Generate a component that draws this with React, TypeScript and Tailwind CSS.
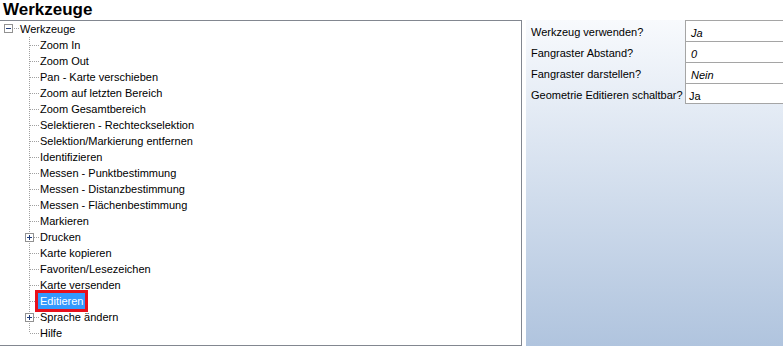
import React from 'react';

interface TreeItem {
  label: string;
  expandable?: boolean;
  selected?: boolean;
}

const items: TreeItem[] = [
  { label: 'Zoom In' },
  { label: 'Zoom Out' },
  { label: 'Pan - Karte verschieben' },
  { label: 'Zoom auf letzten Bereich' },
  { label: 'Zoom Gesamtbereich' },
  { label: 'Selektieren - Rechteckselektion' },
  { label: 'Selektion/Markierung entfernen' },
  { label: 'Identifizieren' },
  { label: 'Messen - Punktbestimmung' },
  { label: 'Messen - Distanzbestimmung' },
  { label: 'Messen - Flächenbestimmung' },
  { label: 'Markieren' },
  { label: 'Drucken', expandable: true },
  { label: 'Karte kopieren' },
  { label: 'Favoriten/Lesezeichen' },
  { label: 'Karte versenden' },
  { label: 'Editieren', selected: true },
  { label: 'Sprache ändern', expandable: true },
  { label: 'Hilfe' },
];

const props = [
  { label: 'Werkzeug verwenden?', value: 'Ja', italic: true },
  { label: 'Fangraster Abstand?', value: '0', italic: true },
  { label: 'Fangraster darstellen?', value: 'Nein', italic: true },
  { label: 'Geometrie Editieren schaltbar?', value: 'Ja', italic: false },
];

function ExpandBox({ x, y, open }: { x: number; y: number; open: boolean }) {
  return (
    <g>
      <rect x={x + 0.5} y={y + 0.5} width={8} height={8} fill="#fff" stroke="#919191" />
      <line x1={x + 2} y1={y + 4.5} x2={x + 7} y2={y + 4.5} stroke="#1f3c7a" />
      {!open && <line x1={x + 4.5} y1={y + 2} x2={x + 4.5} y2={y + 7} stroke="#1f3c7a" />}
    </g>
  );
}

function Connector({ last, expandable }: { last: boolean; expandable?: boolean }) {
  return (
    <svg width={40} height={16} className="shrink-0">
      <line x1={29.5} y1={0} x2={29.5} y2={last ? 8 : 16} stroke="#a0a0a0" strokeDasharray="1 1" />
      <line x1={30} y1={8.5} x2={39} y2={8.5} stroke="#a0a0a0" strokeDasharray="1 1" />
      {expandable && <ExpandBox x={25} y={4} open={false} />}
    </svg>
  );
}

export default function App() {
  return (
    <div className="w-[783px] h-[350px] bg-white overflow-hidden font-['Liberation_Sans',Arial,sans-serif] text-black">
      {/* Title */}
      <div className="h-[20px] pl-[3px] text-[17px] leading-[20px] font-bold">Werkzeuge</div>

      <div className="flex">
        {/* Tree */}
        <div className="ml-[-1px] w-[523px] h-[326px] border border-[#828790] bg-white text-[11px]">
          <div className="flex items-center h-[16px]">
            <svg width={20} height={16} className="shrink-0">
              <ExpandBox x={4} y={3} open={true} />
              <line x1={14} y1={7.5} x2={19} y2={7.5} stroke="#a0a0a0" strokeDasharray="1 1" />
            </svg>
            <span className="leading-[16px]">Werkzeuge</span>
          </div>
          {items.map((item, idx) => (
            <div key={item.label} className="flex items-center h-[16px]">
              <Connector last={idx === items.length - 1} expandable={item.expandable} />
              {item.selected ? (
                <span className="relative z-10 ml-[-5px] -my-[3px] h-[22px] border-[3px] border-[#e8101c] bg-[#3399ff] px-[2px] leading-[16px] text-white">
                  {item.label}
                </span>
              ) : (
                <span className="leading-[16px] whitespace-nowrap">{item.label}</span>
              )}
            </div>
          ))}
        </div>

        {/* Property panel */}
        <div className="ml-[4px] w-[257px] h-[326px] bg-gradient-to-b from-[#f8fafd] to-[#b0c4de] text-[11px]">
          {props.map((p, idx) => (
            <div key={p.label} className="flex h-[21px]">
              <div className="w-[159px] pl-[5px] pt-[4px] leading-[16px] whitespace-nowrap">{p.label}</div>
              <div
                className={`flex-1 bg-white border-l border-t border-[#a5a5a5] pt-[4px] leading-[16px] ${
                  idx === props.length - 1 ? 'border-b pl-[3px]' : 'pl-[5px] italic'
                }`}
              >
                {p.value}
              </div>
            </div>
          ))}
        </div>
      </div>
    </div>
  );
}
